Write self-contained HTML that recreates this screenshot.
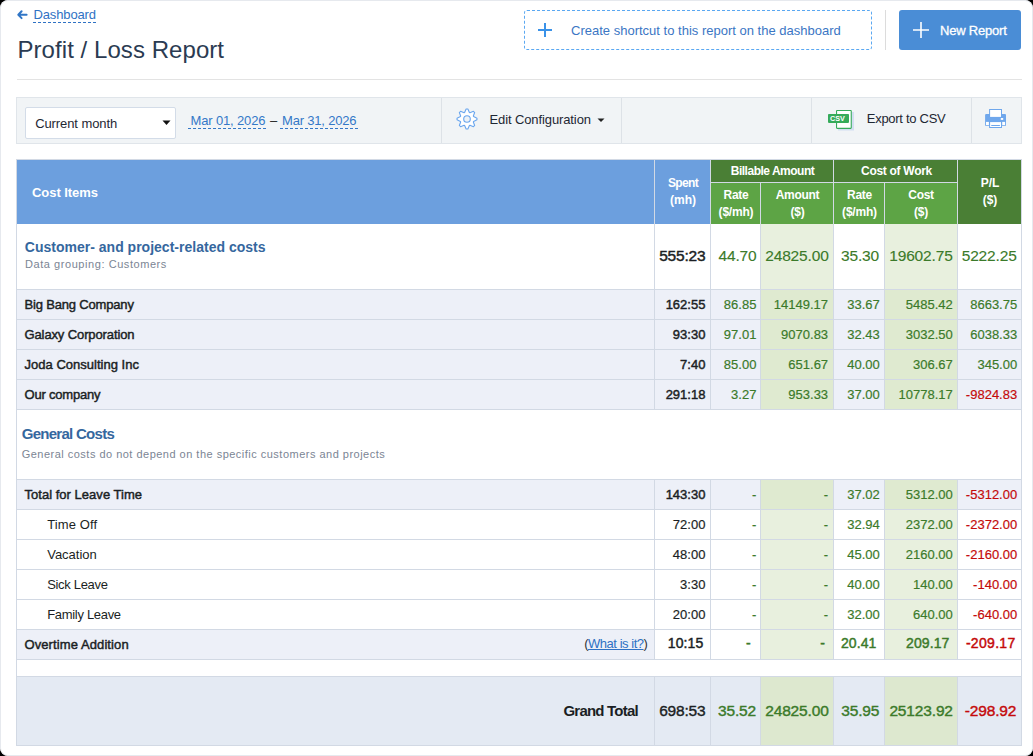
<!DOCTYPE html>
<html><head><meta charset="utf-8"><style>
html,body{margin:0;padding:0;background:#000;}
body{width:1033px;height:756px;overflow:hidden;position:relative;font-family:"Liberation Sans", sans-serif;}
#pg{position:absolute;left:0;top:0;width:1033px;height:756px;background:#fff;border-radius:8px;overflow:hidden;}
#bd{position:absolute;left:0;top:0;width:1033px;height:756px;box-sizing:border-box;border:1px solid #e6e9ee;border-radius:8px;}
#pg>div,#pg>svg{position:absolute;}
.t{white-space:nowrap;}
</style></head><body><div id="pg">
<svg style="left:16px;top:9px" width="13" height="12" viewBox="0 0 13 12"><path d="M5.6 2.3 L2.3 5.7 L5.6 9.1 M2.5 5.7 H10.6" fill="none" stroke="#3176c6" stroke-width="2" stroke-linecap="round" stroke-linejoin="round"/></svg>
<div class="t" style="top:6.5px;font-size:13px;line-height:16px;color:#2f72c4;left:33.5px;letter-spacing:-0.138px;">Dashboard</div>
<div style="left:33px;top:22px;width:64px;height:1px;background:repeating-linear-gradient(90deg,#2f72c4 0 3px,transparent 3px 5px);"></div>
<div class="t" style="top:34.68px;font-size:24px;line-height:30px;color:#2b3b52;left:17.5px;letter-spacing:0.058px;">Profit / Loss Report</div>
<div style="left:17px;top:79px;width:1005px;height:1px;background:#e3e3e3;"></div>
<div style="left:524px;top:10px;width:348px;height:40px;box-sizing:border-box;border:1px dashed #5aa8f2;border-radius:3px;"></div>
<svg style="left:538px;top:23px" width="14" height="14"><path d="M7 0V14M0 7H14" stroke="#3a92e8" stroke-width="2"/></svg>
<div class="t" style="top:22.5px;font-size:13px;line-height:16px;color:#3b76c4;left:571px;letter-spacing:0.005px;">Create shortcut to this report on the dashboard</div>
<div style="left:885px;top:10px;width:1px;height:40px;background:#dcdcdc;"></div>
<div style="left:899px;top:10px;width:122px;height:40px;background:#4a8dd6;border-radius:3px;"></div>
<svg style="left:913px;top:22px" width="16" height="16"><path d="M8 0V16M0 8H16" stroke="#fff" stroke-width="1.6"/></svg>
<div class="t" style="top:22.5px;font-size:13px;line-height:16px;color:#fff;left:940px;-webkit-text-stroke:0.3px #fff;letter-spacing:-0.206px;">New Report</div>
<div style="left:16px;top:97px;width:1006px;height:47px;box-sizing:border-box;background:#f1f4f6;border:1px solid #e0e5ea;"></div>
<div style="left:25px;top:107px;width:151px;height:32px;box-sizing:border-box;background:#fff;border:1px solid #d3dce8;border-radius:2px;"></div>
<div class="t" style="top:116.2px;font-size:13px;line-height:16px;color:#1e2733;left:35.2px;letter-spacing:-0.092px;">Current month</div>
<svg style="left:162px;top:120px" width="9" height="6"><path d="M0.5 0.5H8.5L4.5 5Z" fill="#111"/></svg>
<div class="t" style="top:112.5px;font-size:13px;line-height:16px;color:#3478c8;left:190.5px;letter-spacing:-0.145px;">Mar 01, 2026</div>
<div style="left:188px;top:128px;width:79px;height:1px;background:repeating-linear-gradient(90deg,#3478c8 0 3px,transparent 3px 5px);"></div>
<div class="t" style="top:112.5px;font-size:13px;line-height:16px;color:#222;left:270px;">&ndash;</div>
<div class="t" style="top:112.5px;font-size:13px;line-height:16px;color:#3478c8;left:282px;letter-spacing:-0.191px;">Mar 31, 2026</div>
<div style="left:280px;top:128px;width:79px;height:1px;background:repeating-linear-gradient(90deg,#3478c8 0 3px,transparent 3px 5px);"></div>
<div style="left:441px;top:98px;width:1px;height:45px;background:#dde2e7;"></div>
<svg style="left:455.3px;top:106.7px" width="24" height="24" viewBox="0 0 24 24"><path d="M9.61 5.42 L11.13 2.04 L12.87 2.04 L14.39 5.42 L14.96 5.66 L18.43 4.34 L19.66 5.57 L18.34 9.04 L18.58 9.61 L21.96 11.13 L21.96 12.87 L18.58 14.39 L18.34 14.96 L19.66 18.43 L18.43 19.66 L14.96 18.34 L14.39 18.58 L12.87 21.96 L11.13 21.96 L9.61 18.58 L9.04 18.34 L5.57 19.66 L4.34 18.43 L5.66 14.96 L5.42 14.39 L2.04 12.87 L2.04 11.13 L5.42 9.61 L5.66 9.04 L4.34 5.57 L5.57 4.34 L9.04 5.66Z" fill="#fff" stroke="#6aa6ee" stroke-width="1.1" stroke-linejoin="round"/><circle cx="12" cy="12" r="3.3" fill="#eef2f6" stroke="#6aa6ee" stroke-width="1.1"/></svg>
<div class="t" style="top:111.5px;font-size:13px;line-height:16px;color:#1e2733;left:489.5px;letter-spacing:-0.109px;">Edit Configuration</div>
<svg style="left:597px;top:118px" width="9" height="5"><path d="M0.5 0.5H7.5L4 4Z" fill="#222"/></svg>
<div style="left:621px;top:98px;width:1px;height:45px;background:#dde2e7;"></div>
<div style="left:811px;top:98px;width:1px;height:45px;background:#dde2e7;"></div>
<svg style="left:826px;top:108px" width="30" height="24" viewBox="0 0 30 24"><rect x="12" y="4" width="16" height="18.5" fill="#d3def2"/><rect x="10.55" y="2.45" width="14.7" height="17.9" rx="0.6" fill="#fff" stroke="#36ab5a" stroke-width="1.1"/><rect x="2" y="6" width="21" height="8.9" rx="0.8" fill="#36ab5a"/><text x="3.9" y="13" font-family="Liberation Sans" font-weight="bold" font-size="7.2" fill="#fff" letter-spacing="0.1">CSV</text></svg>
<div class="t" style="top:111.3px;font-size:13px;line-height:16px;color:#1e2733;left:866.8px;letter-spacing:-0.287px;">Export to CSV</div>
<div style="left:971px;top:98px;width:1px;height:45px;background:#dde2e7;"></div>
<svg style="left:982px;top:106px" width="28" height="25" viewBox="0 0 28 25"><path d="M3.1 9.1 Q3.1 8.1 4.1 8.1 H23 Q24 8.1 24 9.1 V19.8 H3.1Z" fill="#6fa7ec"/><rect x="4" y="15.9" width="2.9" height="3.1" fill="#fff"/><rect x="20.2" y="15.9" width="2.9" height="3.1" fill="#fff"/><rect x="7.1" y="3" width="12.9" height="8" fill="#6fa7ec"/><rect x="8.1" y="4" width="10.9" height="6.9" fill="#fff"/><rect x="7.1" y="15.5" width="12.9" height="6.5" fill="#6fa7ec"/><rect x="8.1" y="16.1" width="10.9" height="4.9" fill="#fff"/><rect x="9.1" y="19" width="8.9" height="1" rx="0.5" fill="#6fa7ec"/><rect x="18.8" y="12" width="2.4" height="1.9" fill="#fff"/></svg>
<div style="left:16px;top:159px;width:1006px;height:65px;background:#d2d9e4;"></div>
<div style="left:17px;top:160px;width:637px;height:64px;background:#6c9fde;"></div>
<div style="left:655px;top:160px;width:55px;height:64px;background:#6c9fde;"></div>
<div style="left:711px;top:160px;width:122px;height:22px;background:#4a7f35;"></div>
<div style="left:834px;top:160px;width:123px;height:22px;background:#4a7f35;"></div>
<div style="left:711px;top:183px;width:49px;height:41px;background:#5da445;"></div>
<div style="left:761px;top:183px;width:72px;height:41px;background:#5da445;"></div>
<div style="left:834px;top:183px;width:50px;height:41px;background:#5da445;"></div>
<div style="left:885px;top:183px;width:72px;height:41px;background:#5da445;"></div>
<div style="left:958px;top:160px;width:63px;height:64px;background:#4a7f35;"></div>
<div class="t" style="top:185.0px;font-size:13px;line-height:16px;color:#ffffff;font-weight:bold;left:32px;letter-spacing:-0.05px;">Cost Items</div>
<div class="t" style="top:176.34px;font-size:12px;line-height:15px;color:#ffffff;font-weight:bold;left:656.0px;width:54px;text-align:center;letter-spacing:-0.663px;">Spent</div>
<div class="t" style="top:193.34px;font-size:12px;line-height:15px;color:#ffffff;font-weight:bold;left:656.0px;width:54px;text-align:center;">(mh)</div>
<div class="t" style="top:163.84px;font-size:12px;line-height:15px;color:#ffffff;font-weight:bold;left:711.5px;width:122px;text-align:center;letter-spacing:-0.493px;">Billable Amount</div>
<div class="t" style="top:163.84px;font-size:12px;line-height:15px;color:#ffffff;font-weight:bold;left:835.5px;width:122px;text-align:center;letter-spacing:-0.3px;">Cost of Work</div>
<div class="t" style="top:187.84px;font-size:12px;line-height:15px;color:#ffffff;font-weight:bold;left:701.0px;width:70px;text-align:center;letter-spacing:-0.3px;">Rate</div>
<div class="t" style="top:204.84px;font-size:12px;line-height:15px;color:#ffffff;font-weight:bold;left:701.0px;width:70px;text-align:center;letter-spacing:-0.2px;">($/mh)</div>
<div class="t" style="top:187.84px;font-size:12px;line-height:15px;color:#ffffff;font-weight:bold;left:762.5px;width:70px;text-align:center;letter-spacing:-0.3px;">Amount</div>
<div class="t" style="top:204.84px;font-size:12px;line-height:15px;color:#ffffff;font-weight:bold;left:762.5px;width:70px;text-align:center;letter-spacing:-0.2px;">($)</div>
<div class="t" style="top:187.84px;font-size:12px;line-height:15px;color:#ffffff;font-weight:bold;left:824.5px;width:70px;text-align:center;letter-spacing:-0.3px;">Rate</div>
<div class="t" style="top:204.84px;font-size:12px;line-height:15px;color:#ffffff;font-weight:bold;left:824.5px;width:70px;text-align:center;letter-spacing:-0.2px;">($/mh)</div>
<div class="t" style="top:187.84px;font-size:12px;line-height:15px;color:#ffffff;font-weight:bold;left:886.0px;width:70px;text-align:center;letter-spacing:-0.3px;">Cost</div>
<div class="t" style="top:204.84px;font-size:12px;line-height:15px;color:#ffffff;font-weight:bold;left:886.0px;width:70px;text-align:center;letter-spacing:-0.2px;">($)</div>
<div class="t" style="top:175.84px;font-size:12px;line-height:15px;color:#ffffff;font-weight:bold;left:959.0px;width:62px;text-align:center;">P/L</div>
<div class="t" style="top:192.84px;font-size:12px;line-height:15px;color:#ffffff;font-weight:bold;left:959.0px;width:62px;text-align:center;">($)</div>
<div style="left:17px;top:224px;width:637px;height:65px;background:#ffffff;"></div>
<div style="left:655px;top:224px;width:55px;height:65px;background:#ffffff;"></div>
<div style="left:711px;top:224px;width:49px;height:65px;background:#ffffff;"></div>
<div style="left:761px;top:224px;width:72px;height:65px;background:#e8f0de;"></div>
<div style="left:834px;top:224px;width:50px;height:65px;background:#ffffff;"></div>
<div style="left:885px;top:224px;width:72px;height:65px;background:#e8f0de;"></div>
<div style="left:958px;top:224px;width:63px;height:65px;background:#ffffff;"></div>
<div style="left:16px;top:224px;width:1px;height:65px;background:#d2d9e4;"></div>
<div style="left:654px;top:224px;width:1px;height:65px;background:#d2d9e4;"></div>
<div style="left:710px;top:224px;width:1px;height:65px;background:#d2d9e4;"></div>
<div style="left:760px;top:224px;width:1px;height:65px;background:#d2d9e4;"></div>
<div style="left:833px;top:224px;width:1px;height:65px;background:#d2d9e4;"></div>
<div style="left:884px;top:224px;width:1px;height:65px;background:#d2d9e4;"></div>
<div style="left:957px;top:224px;width:1px;height:65px;background:#d2d9e4;"></div>
<div style="left:1021px;top:224px;width:1px;height:65px;background:#d2d9e4;"></div>
<div style="left:16px;top:289px;width:1006px;height:1px;background:#d2d9e4;"></div>
<div class="t" style="top:238.15px;font-size:14px;line-height:18px;color:#35679e;font-weight:bold;left:24.8px;letter-spacing:0.009px;">Customer- and project-related costs</div>
<div class="t" style="top:256.99px;font-size:11px;line-height:14px;color:#7b8594;left:25px;letter-spacing:0.561px;">Data grouping: Customers</div>
<div class="t" style="top:245.83px;font-size:15.5px;line-height:19px;color:#1b1f24;left:585.4px;width:120px;text-align:right;-webkit-text-stroke:0.45px currentColor;letter-spacing:-0.2px;">555:23</div>
<div class="t" style="top:245.83px;font-size:15.5px;line-height:19px;color:#3b7a2a;left:636.55px;width:120px;text-align:right;-webkit-text-stroke:0.12px currentColor;letter-spacing:-0.15px;">44.70</div>
<div class="t" style="top:245.83px;font-size:15.5px;line-height:19px;color:#3b7a2a;left:708.65px;width:120px;text-align:right;-webkit-text-stroke:0.12px currentColor;letter-spacing:-0.15px;">24825.00</div>
<div class="t" style="top:245.83px;font-size:15.5px;line-height:19px;color:#3b7a2a;left:759.05px;width:120px;text-align:right;-webkit-text-stroke:0.12px currentColor;letter-spacing:-0.15px;">35.30</div>
<div class="t" style="top:245.83px;font-size:15.5px;line-height:19px;color:#3b7a2a;left:832.65px;width:120px;text-align:right;-webkit-text-stroke:0.12px currentColor;letter-spacing:-0.15px;">19602.75</div>
<div class="t" style="top:245.83px;font-size:15.5px;line-height:19px;color:#3b7a2a;left:896.65px;width:120px;text-align:right;-webkit-text-stroke:0.12px currentColor;letter-spacing:-0.15px;">5222.25</div>
<div style="left:17px;top:290px;width:637px;height:29px;background:#edf0f8;"></div>
<div style="left:655px;top:290px;width:55px;height:29px;background:#edf0f8;"></div>
<div style="left:711px;top:290px;width:49px;height:29px;background:#edf0f8;"></div>
<div style="left:761px;top:290px;width:72px;height:29px;background:#dfead0;"></div>
<div style="left:834px;top:290px;width:50px;height:29px;background:#edf0f8;"></div>
<div style="left:885px;top:290px;width:72px;height:29px;background:#dfead0;"></div>
<div style="left:958px;top:290px;width:63px;height:29px;background:#edf0f8;"></div>
<div style="left:16px;top:290px;width:1px;height:29px;background:#d2d9e4;"></div>
<div style="left:654px;top:290px;width:1px;height:29px;background:#d2d9e4;"></div>
<div style="left:710px;top:290px;width:1px;height:29px;background:#d2d9e4;"></div>
<div style="left:760px;top:290px;width:1px;height:29px;background:#d2d9e4;"></div>
<div style="left:833px;top:290px;width:1px;height:29px;background:#d2d9e4;"></div>
<div style="left:884px;top:290px;width:1px;height:29px;background:#d2d9e4;"></div>
<div style="left:957px;top:290px;width:1px;height:29px;background:#d2d9e4;"></div>
<div style="left:1021px;top:290px;width:1px;height:29px;background:#d2d9e4;"></div>
<div style="left:16px;top:319px;width:1006px;height:1px;background:#d2d9e4;"></div>
<div class="t" style="top:296.7px;font-size:13px;line-height:16px;color:#1b1f24;left:24.5px;-webkit-text-stroke:0.45px currentColor;letter-spacing:-0.173px;">Big Bang Company</div>
<div class="t" style="top:296.5px;font-size:13px;line-height:16px;color:#1b1f24;left:585.4px;width:120px;text-align:right;-webkit-text-stroke:0.45px currentColor;">162:55</div>
<div class="t" style="top:296.5px;font-size:13px;line-height:16px;color:#3b7a2a;left:636.4px;width:120px;text-align:right;-webkit-text-stroke:0.18px currentColor;">86.85</div>
<div class="t" style="top:296.5px;font-size:13px;line-height:16px;color:#3b7a2a;left:708.1px;width:120px;text-align:right;-webkit-text-stroke:0.18px currentColor;">14149.17</div>
<div class="t" style="top:296.5px;font-size:13px;line-height:16px;color:#3b7a2a;left:759.8px;width:120px;text-align:right;-webkit-text-stroke:0.18px currentColor;">33.67</div>
<div class="t" style="top:296.5px;font-size:13px;line-height:16px;color:#3b7a2a;left:832.8px;width:120px;text-align:right;-webkit-text-stroke:0.18px currentColor;">5485.42</div>
<div class="t" style="top:296.5px;font-size:13px;line-height:16px;color:#3b7a2a;left:897.1999999999999px;width:120px;text-align:right;-webkit-text-stroke:0.18px currentColor;">8663.75</div>
<div style="left:17px;top:320px;width:637px;height:29px;background:#edf0f8;"></div>
<div style="left:655px;top:320px;width:55px;height:29px;background:#edf0f8;"></div>
<div style="left:711px;top:320px;width:49px;height:29px;background:#edf0f8;"></div>
<div style="left:761px;top:320px;width:72px;height:29px;background:#dfead0;"></div>
<div style="left:834px;top:320px;width:50px;height:29px;background:#edf0f8;"></div>
<div style="left:885px;top:320px;width:72px;height:29px;background:#dfead0;"></div>
<div style="left:958px;top:320px;width:63px;height:29px;background:#edf0f8;"></div>
<div style="left:16px;top:320px;width:1px;height:29px;background:#d2d9e4;"></div>
<div style="left:654px;top:320px;width:1px;height:29px;background:#d2d9e4;"></div>
<div style="left:710px;top:320px;width:1px;height:29px;background:#d2d9e4;"></div>
<div style="left:760px;top:320px;width:1px;height:29px;background:#d2d9e4;"></div>
<div style="left:833px;top:320px;width:1px;height:29px;background:#d2d9e4;"></div>
<div style="left:884px;top:320px;width:1px;height:29px;background:#d2d9e4;"></div>
<div style="left:957px;top:320px;width:1px;height:29px;background:#d2d9e4;"></div>
<div style="left:1021px;top:320px;width:1px;height:29px;background:#d2d9e4;"></div>
<div style="left:16px;top:349px;width:1006px;height:1px;background:#d2d9e4;"></div>
<div class="t" style="top:326.7px;font-size:13px;line-height:16px;color:#1b1f24;left:24.5px;-webkit-text-stroke:0.45px currentColor;letter-spacing:-0.118px;">Galaxy Corporation</div>
<div class="t" style="top:326.5px;font-size:13px;line-height:16px;color:#1b1f24;left:585.4px;width:120px;text-align:right;-webkit-text-stroke:0.45px currentColor;">93:30</div>
<div class="t" style="top:326.5px;font-size:13px;line-height:16px;color:#3b7a2a;left:636.4px;width:120px;text-align:right;-webkit-text-stroke:0.18px currentColor;">97.01</div>
<div class="t" style="top:326.5px;font-size:13px;line-height:16px;color:#3b7a2a;left:708.1px;width:120px;text-align:right;-webkit-text-stroke:0.18px currentColor;">9070.83</div>
<div class="t" style="top:326.5px;font-size:13px;line-height:16px;color:#3b7a2a;left:759.8px;width:120px;text-align:right;-webkit-text-stroke:0.18px currentColor;">32.43</div>
<div class="t" style="top:326.5px;font-size:13px;line-height:16px;color:#3b7a2a;left:832.8px;width:120px;text-align:right;-webkit-text-stroke:0.18px currentColor;">3032.50</div>
<div class="t" style="top:326.5px;font-size:13px;line-height:16px;color:#3b7a2a;left:897.1999999999999px;width:120px;text-align:right;-webkit-text-stroke:0.18px currentColor;">6038.33</div>
<div style="left:17px;top:350px;width:637px;height:29px;background:#edf0f8;"></div>
<div style="left:655px;top:350px;width:55px;height:29px;background:#edf0f8;"></div>
<div style="left:711px;top:350px;width:49px;height:29px;background:#edf0f8;"></div>
<div style="left:761px;top:350px;width:72px;height:29px;background:#dfead0;"></div>
<div style="left:834px;top:350px;width:50px;height:29px;background:#edf0f8;"></div>
<div style="left:885px;top:350px;width:72px;height:29px;background:#dfead0;"></div>
<div style="left:958px;top:350px;width:63px;height:29px;background:#edf0f8;"></div>
<div style="left:16px;top:350px;width:1px;height:29px;background:#d2d9e4;"></div>
<div style="left:654px;top:350px;width:1px;height:29px;background:#d2d9e4;"></div>
<div style="left:710px;top:350px;width:1px;height:29px;background:#d2d9e4;"></div>
<div style="left:760px;top:350px;width:1px;height:29px;background:#d2d9e4;"></div>
<div style="left:833px;top:350px;width:1px;height:29px;background:#d2d9e4;"></div>
<div style="left:884px;top:350px;width:1px;height:29px;background:#d2d9e4;"></div>
<div style="left:957px;top:350px;width:1px;height:29px;background:#d2d9e4;"></div>
<div style="left:1021px;top:350px;width:1px;height:29px;background:#d2d9e4;"></div>
<div style="left:16px;top:379px;width:1006px;height:1px;background:#d2d9e4;"></div>
<div class="t" style="top:356.7px;font-size:13px;line-height:16px;color:#1b1f24;left:24.5px;-webkit-text-stroke:0.45px currentColor;letter-spacing:0.017px;">Joda Consulting Inc</div>
<div class="t" style="top:356.5px;font-size:13px;line-height:16px;color:#1b1f24;left:585.4px;width:120px;text-align:right;-webkit-text-stroke:0.45px currentColor;">7:40</div>
<div class="t" style="top:356.5px;font-size:13px;line-height:16px;color:#3b7a2a;left:636.4px;width:120px;text-align:right;-webkit-text-stroke:0.18px currentColor;">85.00</div>
<div class="t" style="top:356.5px;font-size:13px;line-height:16px;color:#3b7a2a;left:708.1px;width:120px;text-align:right;-webkit-text-stroke:0.18px currentColor;">651.67</div>
<div class="t" style="top:356.5px;font-size:13px;line-height:16px;color:#3b7a2a;left:759.8px;width:120px;text-align:right;-webkit-text-stroke:0.18px currentColor;">40.00</div>
<div class="t" style="top:356.5px;font-size:13px;line-height:16px;color:#3b7a2a;left:832.8px;width:120px;text-align:right;-webkit-text-stroke:0.18px currentColor;">306.67</div>
<div class="t" style="top:356.5px;font-size:13px;line-height:16px;color:#3b7a2a;left:897.1999999999999px;width:120px;text-align:right;-webkit-text-stroke:0.18px currentColor;">345.00</div>
<div style="left:17px;top:380px;width:637px;height:29px;background:#edf0f8;"></div>
<div style="left:655px;top:380px;width:55px;height:29px;background:#edf0f8;"></div>
<div style="left:711px;top:380px;width:49px;height:29px;background:#edf0f8;"></div>
<div style="left:761px;top:380px;width:72px;height:29px;background:#dfead0;"></div>
<div style="left:834px;top:380px;width:50px;height:29px;background:#edf0f8;"></div>
<div style="left:885px;top:380px;width:72px;height:29px;background:#dfead0;"></div>
<div style="left:958px;top:380px;width:63px;height:29px;background:#edf0f8;"></div>
<div style="left:16px;top:380px;width:1px;height:29px;background:#d2d9e4;"></div>
<div style="left:654px;top:380px;width:1px;height:29px;background:#d2d9e4;"></div>
<div style="left:710px;top:380px;width:1px;height:29px;background:#d2d9e4;"></div>
<div style="left:760px;top:380px;width:1px;height:29px;background:#d2d9e4;"></div>
<div style="left:833px;top:380px;width:1px;height:29px;background:#d2d9e4;"></div>
<div style="left:884px;top:380px;width:1px;height:29px;background:#d2d9e4;"></div>
<div style="left:957px;top:380px;width:1px;height:29px;background:#d2d9e4;"></div>
<div style="left:1021px;top:380px;width:1px;height:29px;background:#d2d9e4;"></div>
<div style="left:16px;top:409px;width:1006px;height:1px;background:#d2d9e4;"></div>
<div class="t" style="top:386.7px;font-size:13px;line-height:16px;color:#1b1f24;left:24.5px;-webkit-text-stroke:0.45px currentColor;letter-spacing:-0.205px;">Our company</div>
<div class="t" style="top:386.5px;font-size:13px;line-height:16px;color:#1b1f24;left:585.4px;width:120px;text-align:right;-webkit-text-stroke:0.45px currentColor;">291:18</div>
<div class="t" style="top:386.5px;font-size:13px;line-height:16px;color:#3b7a2a;left:636.4px;width:120px;text-align:right;-webkit-text-stroke:0.18px currentColor;">3.27</div>
<div class="t" style="top:386.5px;font-size:13px;line-height:16px;color:#3b7a2a;left:708.1px;width:120px;text-align:right;-webkit-text-stroke:0.18px currentColor;">953.33</div>
<div class="t" style="top:386.5px;font-size:13px;line-height:16px;color:#3b7a2a;left:759.8px;width:120px;text-align:right;-webkit-text-stroke:0.18px currentColor;">37.00</div>
<div class="t" style="top:386.5px;font-size:13px;line-height:16px;color:#3b7a2a;left:832.8px;width:120px;text-align:right;-webkit-text-stroke:0.18px currentColor;">10778.17</div>
<div class="t" style="top:386.5px;font-size:13px;line-height:16px;color:#c40a0a;left:897.1999999999999px;width:120px;text-align:right;-webkit-text-stroke:0.18px currentColor;">-9824.83</div>
<div style="left:17px;top:410px;width:1004px;height:69px;background:#fff;"></div>
<div style="left:16px;top:410px;width:1px;height:69px;background:#d2d9e4;"></div>
<div style="left:1021px;top:410px;width:1px;height:69px;background:#d2d9e4;"></div>
<div style="left:16px;top:479px;width:1006px;height:1px;background:#d2d9e4;"></div>
<div class="t" style="top:423.9px;font-size:15px;line-height:19px;color:#35679e;font-weight:bold;left:21.7px;letter-spacing:-0.717px;">General Costs</div>
<div class="t" style="top:446.99px;font-size:11px;line-height:14px;color:#7b8594;left:21.7px;letter-spacing:0.486px;">General costs do not depend on the specific customers and projects</div>
<div style="left:17px;top:480px;width:637px;height:29px;background:#edf0f8;"></div>
<div style="left:655px;top:480px;width:55px;height:29px;background:#edf0f8;"></div>
<div style="left:711px;top:480px;width:49px;height:29px;background:#edf0f8;"></div>
<div style="left:761px;top:480px;width:72px;height:29px;background:#dfead0;"></div>
<div style="left:834px;top:480px;width:50px;height:29px;background:#edf0f8;"></div>
<div style="left:885px;top:480px;width:72px;height:29px;background:#dfead0;"></div>
<div style="left:958px;top:480px;width:63px;height:29px;background:#edf0f8;"></div>
<div style="left:16px;top:480px;width:1px;height:29px;background:#d2d9e4;"></div>
<div style="left:654px;top:480px;width:1px;height:29px;background:#d2d9e4;"></div>
<div style="left:710px;top:480px;width:1px;height:29px;background:#d2d9e4;"></div>
<div style="left:760px;top:480px;width:1px;height:29px;background:#d2d9e4;"></div>
<div style="left:833px;top:480px;width:1px;height:29px;background:#d2d9e4;"></div>
<div style="left:884px;top:480px;width:1px;height:29px;background:#d2d9e4;"></div>
<div style="left:957px;top:480px;width:1px;height:29px;background:#d2d9e4;"></div>
<div style="left:1021px;top:480px;width:1px;height:29px;background:#d2d9e4;"></div>
<div style="left:16px;top:509px;width:1006px;height:1px;background:#d2d9e4;"></div>
<div class="t" style="top:486.7px;font-size:13px;line-height:16px;color:#1b1f24;left:24.5px;-webkit-text-stroke:0.45px currentColor;letter-spacing:0.024px;">Total for Leave Time</div>
<div class="t" style="top:486.5px;font-size:13px;line-height:16px;color:#1b1f24;left:585.4px;width:120px;text-align:right;-webkit-text-stroke:0.45px currentColor;">143:30</div>
<div class="t" style="top:486.5px;font-size:13px;line-height:16px;color:#3b7a2a;left:636.4px;width:120px;text-align:right;-webkit-text-stroke:0.18px currentColor;">-</div>
<div class="t" style="top:486.5px;font-size:13px;line-height:16px;color:#3b7a2a;left:708.1px;width:120px;text-align:right;-webkit-text-stroke:0.18px currentColor;">-</div>
<div class="t" style="top:486.5px;font-size:13px;line-height:16px;color:#3b7a2a;left:759.8px;width:120px;text-align:right;-webkit-text-stroke:0.18px currentColor;">37.02</div>
<div class="t" style="top:486.5px;font-size:13px;line-height:16px;color:#3b7a2a;left:832.8px;width:120px;text-align:right;-webkit-text-stroke:0.18px currentColor;">5312.00</div>
<div class="t" style="top:486.5px;font-size:13px;line-height:16px;color:#c40a0a;left:897.1999999999999px;width:120px;text-align:right;-webkit-text-stroke:0.18px currentColor;">-5312.00</div>
<div style="left:17px;top:510px;width:637px;height:29px;background:#ffffff;"></div>
<div style="left:655px;top:510px;width:55px;height:29px;background:#ffffff;"></div>
<div style="left:711px;top:510px;width:49px;height:29px;background:#ffffff;"></div>
<div style="left:761px;top:510px;width:72px;height:29px;background:#e8f0de;"></div>
<div style="left:834px;top:510px;width:50px;height:29px;background:#ffffff;"></div>
<div style="left:885px;top:510px;width:72px;height:29px;background:#e8f0de;"></div>
<div style="left:958px;top:510px;width:63px;height:29px;background:#ffffff;"></div>
<div style="left:16px;top:510px;width:1px;height:29px;background:#d2d9e4;"></div>
<div style="left:654px;top:510px;width:1px;height:29px;background:#d2d9e4;"></div>
<div style="left:710px;top:510px;width:1px;height:29px;background:#d2d9e4;"></div>
<div style="left:760px;top:510px;width:1px;height:29px;background:#d2d9e4;"></div>
<div style="left:833px;top:510px;width:1px;height:29px;background:#d2d9e4;"></div>
<div style="left:884px;top:510px;width:1px;height:29px;background:#d2d9e4;"></div>
<div style="left:957px;top:510px;width:1px;height:29px;background:#d2d9e4;"></div>
<div style="left:1021px;top:510px;width:1px;height:29px;background:#d2d9e4;"></div>
<div style="left:16px;top:539px;width:1006px;height:1px;background:#d2d9e4;"></div>
<div class="t" style="top:516.7px;font-size:13px;line-height:16px;color:#1b1f24;left:47.2px;letter-spacing:0.121px;">Time Off</div>
<div class="t" style="top:516.5px;font-size:13px;line-height:16px;color:#1b1f24;left:585.4px;width:120px;text-align:right;-webkit-text-stroke:0.18px currentColor;">72:00</div>
<div class="t" style="top:516.5px;font-size:13px;line-height:16px;color:#3b7a2a;left:636.4px;width:120px;text-align:right;-webkit-text-stroke:0.18px currentColor;">-</div>
<div class="t" style="top:516.5px;font-size:13px;line-height:16px;color:#3b7a2a;left:708.1px;width:120px;text-align:right;-webkit-text-stroke:0.18px currentColor;">-</div>
<div class="t" style="top:516.5px;font-size:13px;line-height:16px;color:#3b7a2a;left:759.8px;width:120px;text-align:right;-webkit-text-stroke:0.18px currentColor;">32.94</div>
<div class="t" style="top:516.5px;font-size:13px;line-height:16px;color:#3b7a2a;left:832.8px;width:120px;text-align:right;-webkit-text-stroke:0.18px currentColor;">2372.00</div>
<div class="t" style="top:516.5px;font-size:13px;line-height:16px;color:#c40a0a;left:897.1999999999999px;width:120px;text-align:right;-webkit-text-stroke:0.18px currentColor;">-2372.00</div>
<div style="left:17px;top:540px;width:637px;height:29px;background:#ffffff;"></div>
<div style="left:655px;top:540px;width:55px;height:29px;background:#ffffff;"></div>
<div style="left:711px;top:540px;width:49px;height:29px;background:#ffffff;"></div>
<div style="left:761px;top:540px;width:72px;height:29px;background:#e8f0de;"></div>
<div style="left:834px;top:540px;width:50px;height:29px;background:#ffffff;"></div>
<div style="left:885px;top:540px;width:72px;height:29px;background:#e8f0de;"></div>
<div style="left:958px;top:540px;width:63px;height:29px;background:#ffffff;"></div>
<div style="left:16px;top:540px;width:1px;height:29px;background:#d2d9e4;"></div>
<div style="left:654px;top:540px;width:1px;height:29px;background:#d2d9e4;"></div>
<div style="left:710px;top:540px;width:1px;height:29px;background:#d2d9e4;"></div>
<div style="left:760px;top:540px;width:1px;height:29px;background:#d2d9e4;"></div>
<div style="left:833px;top:540px;width:1px;height:29px;background:#d2d9e4;"></div>
<div style="left:884px;top:540px;width:1px;height:29px;background:#d2d9e4;"></div>
<div style="left:957px;top:540px;width:1px;height:29px;background:#d2d9e4;"></div>
<div style="left:1021px;top:540px;width:1px;height:29px;background:#d2d9e4;"></div>
<div style="left:16px;top:569px;width:1006px;height:1px;background:#d2d9e4;"></div>
<div class="t" style="top:546.7px;font-size:13px;line-height:16px;color:#1b1f24;left:47.2px;letter-spacing:-0.007px;">Vacation</div>
<div class="t" style="top:546.5px;font-size:13px;line-height:16px;color:#1b1f24;left:585.4px;width:120px;text-align:right;-webkit-text-stroke:0.18px currentColor;">48:00</div>
<div class="t" style="top:546.5px;font-size:13px;line-height:16px;color:#3b7a2a;left:636.4px;width:120px;text-align:right;-webkit-text-stroke:0.18px currentColor;">-</div>
<div class="t" style="top:546.5px;font-size:13px;line-height:16px;color:#3b7a2a;left:708.1px;width:120px;text-align:right;-webkit-text-stroke:0.18px currentColor;">-</div>
<div class="t" style="top:546.5px;font-size:13px;line-height:16px;color:#3b7a2a;left:759.8px;width:120px;text-align:right;-webkit-text-stroke:0.18px currentColor;">45.00</div>
<div class="t" style="top:546.5px;font-size:13px;line-height:16px;color:#3b7a2a;left:832.8px;width:120px;text-align:right;-webkit-text-stroke:0.18px currentColor;">2160.00</div>
<div class="t" style="top:546.5px;font-size:13px;line-height:16px;color:#c40a0a;left:897.1999999999999px;width:120px;text-align:right;-webkit-text-stroke:0.18px currentColor;">-2160.00</div>
<div style="left:17px;top:570px;width:637px;height:29px;background:#ffffff;"></div>
<div style="left:655px;top:570px;width:55px;height:29px;background:#ffffff;"></div>
<div style="left:711px;top:570px;width:49px;height:29px;background:#ffffff;"></div>
<div style="left:761px;top:570px;width:72px;height:29px;background:#e8f0de;"></div>
<div style="left:834px;top:570px;width:50px;height:29px;background:#ffffff;"></div>
<div style="left:885px;top:570px;width:72px;height:29px;background:#e8f0de;"></div>
<div style="left:958px;top:570px;width:63px;height:29px;background:#ffffff;"></div>
<div style="left:16px;top:570px;width:1px;height:29px;background:#d2d9e4;"></div>
<div style="left:654px;top:570px;width:1px;height:29px;background:#d2d9e4;"></div>
<div style="left:710px;top:570px;width:1px;height:29px;background:#d2d9e4;"></div>
<div style="left:760px;top:570px;width:1px;height:29px;background:#d2d9e4;"></div>
<div style="left:833px;top:570px;width:1px;height:29px;background:#d2d9e4;"></div>
<div style="left:884px;top:570px;width:1px;height:29px;background:#d2d9e4;"></div>
<div style="left:957px;top:570px;width:1px;height:29px;background:#d2d9e4;"></div>
<div style="left:1021px;top:570px;width:1px;height:29px;background:#d2d9e4;"></div>
<div style="left:16px;top:599px;width:1006px;height:1px;background:#d2d9e4;"></div>
<div class="t" style="top:576.7px;font-size:13px;line-height:16px;color:#1b1f24;left:47.2px;letter-spacing:-0.322px;">Sick Leave</div>
<div class="t" style="top:576.5px;font-size:13px;line-height:16px;color:#1b1f24;left:585.4px;width:120px;text-align:right;-webkit-text-stroke:0.18px currentColor;">3:30</div>
<div class="t" style="top:576.5px;font-size:13px;line-height:16px;color:#3b7a2a;left:636.4px;width:120px;text-align:right;-webkit-text-stroke:0.18px currentColor;">-</div>
<div class="t" style="top:576.5px;font-size:13px;line-height:16px;color:#3b7a2a;left:708.1px;width:120px;text-align:right;-webkit-text-stroke:0.18px currentColor;">-</div>
<div class="t" style="top:576.5px;font-size:13px;line-height:16px;color:#3b7a2a;left:759.8px;width:120px;text-align:right;-webkit-text-stroke:0.18px currentColor;">40.00</div>
<div class="t" style="top:576.5px;font-size:13px;line-height:16px;color:#3b7a2a;left:832.8px;width:120px;text-align:right;-webkit-text-stroke:0.18px currentColor;">140.00</div>
<div class="t" style="top:576.5px;font-size:13px;line-height:16px;color:#c40a0a;left:897.1999999999999px;width:120px;text-align:right;-webkit-text-stroke:0.18px currentColor;">-140.00</div>
<div style="left:17px;top:600px;width:637px;height:29px;background:#ffffff;"></div>
<div style="left:655px;top:600px;width:55px;height:29px;background:#ffffff;"></div>
<div style="left:711px;top:600px;width:49px;height:29px;background:#ffffff;"></div>
<div style="left:761px;top:600px;width:72px;height:29px;background:#e8f0de;"></div>
<div style="left:834px;top:600px;width:50px;height:29px;background:#ffffff;"></div>
<div style="left:885px;top:600px;width:72px;height:29px;background:#e8f0de;"></div>
<div style="left:958px;top:600px;width:63px;height:29px;background:#ffffff;"></div>
<div style="left:16px;top:600px;width:1px;height:29px;background:#d2d9e4;"></div>
<div style="left:654px;top:600px;width:1px;height:29px;background:#d2d9e4;"></div>
<div style="left:710px;top:600px;width:1px;height:29px;background:#d2d9e4;"></div>
<div style="left:760px;top:600px;width:1px;height:29px;background:#d2d9e4;"></div>
<div style="left:833px;top:600px;width:1px;height:29px;background:#d2d9e4;"></div>
<div style="left:884px;top:600px;width:1px;height:29px;background:#d2d9e4;"></div>
<div style="left:957px;top:600px;width:1px;height:29px;background:#d2d9e4;"></div>
<div style="left:1021px;top:600px;width:1px;height:29px;background:#d2d9e4;"></div>
<div style="left:16px;top:629px;width:1006px;height:1px;background:#d2d9e4;"></div>
<div class="t" style="top:606.7px;font-size:13px;line-height:16px;color:#1b1f24;left:47.2px;letter-spacing:-0.309px;">Family Leave</div>
<div class="t" style="top:606.5px;font-size:13px;line-height:16px;color:#1b1f24;left:585.4px;width:120px;text-align:right;-webkit-text-stroke:0.18px currentColor;">20:00</div>
<div class="t" style="top:606.5px;font-size:13px;line-height:16px;color:#3b7a2a;left:636.4px;width:120px;text-align:right;-webkit-text-stroke:0.18px currentColor;">-</div>
<div class="t" style="top:606.5px;font-size:13px;line-height:16px;color:#3b7a2a;left:708.1px;width:120px;text-align:right;-webkit-text-stroke:0.18px currentColor;">-</div>
<div class="t" style="top:606.5px;font-size:13px;line-height:16px;color:#3b7a2a;left:759.8px;width:120px;text-align:right;-webkit-text-stroke:0.18px currentColor;">32.00</div>
<div class="t" style="top:606.5px;font-size:13px;line-height:16px;color:#3b7a2a;left:832.8px;width:120px;text-align:right;-webkit-text-stroke:0.18px currentColor;">640.00</div>
<div class="t" style="top:606.5px;font-size:13px;line-height:16px;color:#c40a0a;left:897.1999999999999px;width:120px;text-align:right;-webkit-text-stroke:0.18px currentColor;">-640.00</div>
<div style="left:17px;top:630px;width:637px;height:29px;background:#edf0f8;"></div>
<div style="left:655px;top:630px;width:55px;height:29px;background:#ffffff;"></div>
<div style="left:711px;top:630px;width:49px;height:29px;background:#ffffff;"></div>
<div style="left:761px;top:630px;width:72px;height:29px;background:#e8f0de;"></div>
<div style="left:834px;top:630px;width:50px;height:29px;background:#ffffff;"></div>
<div style="left:885px;top:630px;width:72px;height:29px;background:#e8f0de;"></div>
<div style="left:958px;top:630px;width:63px;height:29px;background:#ffffff;"></div>
<div style="left:16px;top:630px;width:1px;height:29px;background:#d2d9e4;"></div>
<div style="left:654px;top:630px;width:1px;height:29px;background:#d2d9e4;"></div>
<div style="left:710px;top:630px;width:1px;height:29px;background:#d2d9e4;"></div>
<div style="left:760px;top:630px;width:1px;height:29px;background:#d2d9e4;"></div>
<div style="left:833px;top:630px;width:1px;height:29px;background:#d2d9e4;"></div>
<div style="left:884px;top:630px;width:1px;height:29px;background:#d2d9e4;"></div>
<div style="left:957px;top:630px;width:1px;height:29px;background:#d2d9e4;"></div>
<div style="left:1021px;top:630px;width:1px;height:29px;background:#d2d9e4;"></div>
<div style="left:16px;top:659px;width:1006px;height:1px;background:#d2d9e4;"></div>
<div class="t" style="top:636.7px;font-size:13px;line-height:16px;color:#1b1f24;left:24.5px;-webkit-text-stroke:0.45px currentColor;letter-spacing:0.094px;">Overtime Addition</div>
<div class="t" style="left:500px;width:147.43px;text-align:right;top:636px;font-size:13px;line-height:16px;color:#333;letter-spacing:-0.47px;">(<span style="color:#2f72c4;text-decoration:underline;">What is it?</span>)</div>
<div class="t" style="top:634.45px;font-size:14px;line-height:18px;color:#1b1f24;left:583.3px;width:120px;text-align:right;-webkit-text-stroke:0.45px currentColor;letter-spacing:0.1px;">10:15</div>
<div class="t" style="top:634.45px;font-size:14px;line-height:18px;color:#3b7a2a;left:630.6999999999999px;width:120px;text-align:right;-webkit-text-stroke:0.45px currentColor;">-</div>
<div class="t" style="top:634.45px;font-size:14px;line-height:18px;color:#3b7a2a;left:704.9px;width:120px;text-align:right;-webkit-text-stroke:0.45px currentColor;">-</div>
<div class="t" style="top:634.45px;font-size:14px;line-height:18px;color:#3b7a2a;left:756.5px;width:120px;text-align:right;-webkit-text-stroke:0.45px currentColor;letter-spacing:0.1px;">20.41</div>
<div class="t" style="top:634.45px;font-size:14px;line-height:18px;color:#3b7a2a;left:829.5px;width:120px;text-align:right;-webkit-text-stroke:0.45px currentColor;letter-spacing:0.1px;">209.17</div>
<div class="t" style="top:634.45px;font-size:14px;line-height:18px;color:#c40a0a;left:895.4999999999999px;width:120px;text-align:right;-webkit-text-stroke:0.45px currentColor;letter-spacing:0.3px;">-209.17</div>
<div style="left:17px;top:660px;width:1004px;height:16px;background:#fff;"></div>
<div style="left:16px;top:660px;width:1px;height:16px;background:#d2d9e4;"></div>
<div style="left:1021px;top:660px;width:1px;height:16px;background:#d2d9e4;"></div>
<div style="left:16px;top:676px;width:1006px;height:1px;background:#d2d9e4;"></div>
<div style="left:17px;top:677px;width:637px;height:68px;background:#e4eaf3;"></div>
<div style="left:655px;top:677px;width:55px;height:68px;background:#e4eaf3;"></div>
<div style="left:711px;top:677px;width:49px;height:68px;background:#e4eaf3;"></div>
<div style="left:761px;top:677px;width:72px;height:68px;background:#dde8cf;"></div>
<div style="left:834px;top:677px;width:50px;height:68px;background:#e4eaf3;"></div>
<div style="left:885px;top:677px;width:72px;height:68px;background:#dde8cf;"></div>
<div style="left:958px;top:677px;width:63px;height:68px;background:#e4eaf3;"></div>
<div style="left:16px;top:677px;width:1px;height:68px;background:#d2d9e4;"></div>
<div style="left:654px;top:677px;width:1px;height:68px;background:#d2d9e4;"></div>
<div style="left:710px;top:677px;width:1px;height:68px;background:#d2d9e4;"></div>
<div style="left:760px;top:677px;width:1px;height:68px;background:#d2d9e4;"></div>
<div style="left:833px;top:677px;width:1px;height:68px;background:#d2d9e4;"></div>
<div style="left:884px;top:677px;width:1px;height:68px;background:#d2d9e4;"></div>
<div style="left:957px;top:677px;width:1px;height:68px;background:#d2d9e4;"></div>
<div style="left:1021px;top:677px;width:1px;height:68px;background:#d2d9e4;"></div>
<div style="left:16px;top:745px;width:1006px;height:1px;background:#d2d9e4;"></div>
<div class="t" style="top:701.1px;font-size:15px;line-height:19px;color:#1b1f24;font-weight:bold;left:437.80500000000006px;width:200px;text-align:right;letter-spacing:-0.795px;">Grand Total</div>
<div class="t" style="top:701.03px;font-size:15.5px;line-height:19px;color:#1b1f24;left:585.4px;width:120px;text-align:right;-webkit-text-stroke:0.4px currentColor;letter-spacing:-0.2px;">698:53</div>
<div class="t" style="top:701.03px;font-size:15.5px;line-height:19px;color:#3b7a2a;left:636.05px;width:120px;text-align:right;-webkit-text-stroke:0.4px currentColor;letter-spacing:-0.15px;">35.52</div>
<div class="t" style="top:701.03px;font-size:15.5px;line-height:19px;color:#3b7a2a;left:708.65px;width:120px;text-align:right;-webkit-text-stroke:0.4px currentColor;letter-spacing:-0.15px;">24825.00</div>
<div class="t" style="top:701.03px;font-size:15.5px;line-height:19px;color:#3b7a2a;left:759.25px;width:120px;text-align:right;-webkit-text-stroke:0.4px currentColor;letter-spacing:-0.15px;">35.95</div>
<div class="t" style="top:701.03px;font-size:15.5px;line-height:19px;color:#3b7a2a;left:832.85px;width:120px;text-align:right;-webkit-text-stroke:0.4px currentColor;letter-spacing:-0.15px;">25123.92</div>
<div class="t" style="top:701.03px;font-size:15.5px;line-height:19px;color:#c40a0a;left:896.25px;width:120px;text-align:right;-webkit-text-stroke:0.4px currentColor;letter-spacing:-0.15px;">-298.92</div>
<div id="bd"></div>
</div></body></html>
